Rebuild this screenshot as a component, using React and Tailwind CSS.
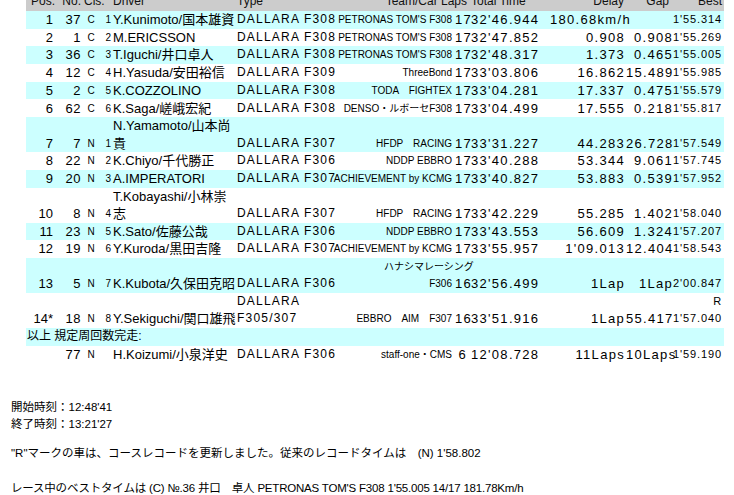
const F = { fontFamily: '"Liberation Sans","Noto Sans CJK JP",sans-serif' };
const rows = [
  ["1","37","C","1","Y.Kunimoto/国本雄資","DALLARA F308","PETRONAS TOM'S F308","17","32'46.944","180.68km/h","","1'55.314",1],
  ["2","1","C","2","M.ERICSSON","DALLARA F308","PETRONAS TOM'S F308","17","32'47.852","0.908","0.908","1'55.269",0],
  ["3","36","C","3","T.Iguchi/井口卓人","DALLARA F308","PETRONAS TOM'S F308","17","32'48.317","1.373","0.465","1'55.005",1],
  ["4","12","C","4","H.Yasuda/安田裕信","DALLARA F309","ThreeBond","17","33'03.806","16.862","15.489","1'55.985",0],
  ["5","2","C","5","K.COZZOLINO","DALLARA F308","TODA　FIGHTEX","17","33'04.281","17.337","0.475","1'55.579",1],
  ["6","62","C","6","K.Saga/嵯峨宏紀","DALLARA F308","DENSO・ルボーセF308","17","33'04.499","17.555","0.218","1'55.817",0],
  ["7","7","N","1",["N.Yamamoto/山本尚","貴"],"DALLARA F307","HFDP　RACING","17","33'31.227","44.283","26.728","1'57.549",1],
  ["8","22","N","2","K.Chiyo/千代勝正","DALLARA F306","NDDP EBBRO","17","33'40.288","53.344","9.061","1'57.745",0],
  ["9","20","N","3","A.IMPERATORI","DALLARA F307","ACHIEVEMENT by KCMG","17","33'40.827","53.883","0.539","1'57.952",1],
  ["10","8","N","4",["T.Kobayashi/小林崇","志"],"DALLARA F307","HFDP　RACING","17","33'42.229","55.285","1.402","1'58.040",0],
  ["11","23","N","5","K.Sato/佐藤公哉","DALLARA F306","NDDP EBBRO","17","33'43.553","56.609","1.324","1'57.207",1],
  ["12","19","N","6","Y.Kuroda/黒田吉隆","DALLARA F307","ACHIEVEMENT by KCMG","17","33'55.957","1'09.013","12.404","1'58.543",0],
  ["13","5","N","7","K.Kubota/久保田克昭","DALLARA F306",["ハナシマレーシング","F306"],"16","32'56.499","1Lap","1Lap","2'00.847",1],
  ["14*","18","N","8","Y.Sekiguchi/関口雄飛",["DALLARA","F305/307"],"EBBRO　AIM　F307","16","33'51.916","1Lap","55.417",["R","1'57.040"],0],
];
const cols = "grid-cols-[29px_27px_18px_12px_124px_88px_131px_15px_80px_76px_47px_51px]";
const two = (v) => Array.isArray(v);
function Cell({ v, cls }) {
  if (two(v)) return <div className={cls}>{v[0]}<br />{v[1]}</div>;
  return <div className={cls}>{v}</div>;
}
const big = "text-[13px]";
const sm = "text-[10px]";
const num = "text-[13px] tracking-[1.3px] whitespace-nowrap";
const typ = "text-[12px] tracking-[1.2px] whitespace-nowrap pl-[1px]";
const best = "text-[11px] tracking-[0.9px] text-right pr-[2px] whitespace-nowrap";
export default function App() {
  return (
    <div className="w-[734px] h-[495px] bg-white text-black overflow-hidden relative" style={F}>
      <div className="ml-[26px] w-[698px] mt-[-7px]">
        <div className={`grid ${cols} bg-[#cccccc] h-[18px] leading-[17px] text-[12px] text-[#111]`}>
          <div className="text-right">Pos.</div><div className="text-right pr-[1px]">No.</div><div className="col-span-2 pl-[2px]">Cls.</div>
          <div className="pl-[1px]">Driver</div><div className="pl-[1px]">Type</div><div className="text-right pr-[3px] col-span-2">Team/Car Laps</div>
          <div className="pl-[1px]">Total Time</div><div className="text-right pr-[2px]">Delay</div><div className="text-right pr-[4px]">Gap</div><div className="text-right pr-[2px]">Best</div>
        </div>
        {rows.map((r, i) => {
          const tall = r.slice(0, 12).some(two);
          return (
            <div key={i} className={`grid ${cols} items-end ${tall ? "h-[35px]" : "h-[17.7px]"} leading-[17.6px] ${r[12] ? "bg-[#ccffff]" : "bg-white"}`}>
              <Cell v={r[0]} cls={`${big} text-right pr-[2px] whitespace-nowrap`} />
              <Cell v={r[1]} cls={`${big} text-right pr-[1px] tracking-[0.5px]`} />
              <Cell v={r[2]} cls={`${sm} text-center`} />
              <Cell v={r[3]} cls={`${sm} text-right pr-[1px]`} />
              <Cell v={r[4]} cls={`${big} whitespace-nowrap pl-[1px]`} />
              <Cell v={r[5]} cls={typ} />
              {i === 12 ? (
                <div className="text-[10px] leading-[17.6px] text-right pr-[3px] whitespace-nowrap"><div className="text-left pl-[60px]">{r[6][0]}</div><div>{r[6][1]}</div></div>
              ) : (
                <Cell v={r[6]} cls={`${sm} text-right pr-[3px] whitespace-nowrap`} />
              )}
              <Cell v={r[7]} cls={`${num} text-right pr-[3px]`} />
              <Cell v={r[8]} cls={`${num} pl-[1px]`} />
              <Cell v={r[9]} cls={`${num} text-right pr-[1px]`} />
              <Cell v={r[10]} cls={`${num} text-right`} />
              <Cell v={r[11]} cls={best} />
            </div>
          );
        })}
        <div className="h-[17.7px] leading-[17.6px] bg-[#ccffff] text-[12px] pl-[1px]">以上 規定周回数完走:</div>
        <div className={`grid ${cols} items-end h-[17.7px] leading-[17.6px]`}>
          <div /><div className={`${big} text-right pr-[1px] tracking-[0.5px]`}>77</div><div className={`${sm} text-center`}>N</div><div />
          <div className={`${big} pl-[1px]`}>H.Koizumi/小泉洋史</div><div className={typ}>DALLARA F306</div>
          <div className={`${sm} text-right pr-[3px]`}>staff-one・CMS</div><div className={`${num} text-right pr-[3px]`}>6</div>
          <div className={`${num} pl-[1px]`}>12'08.728</div><div className={`${num} text-right pr-[1px]`}>11Laps</div>
          <div className={`${num} text-right`}>10Laps</div><div className={best}>1'59.190</div>
        </div>
      </div>
      <div className="pl-[11px] text-[11.5px] leading-[17px] mt-[36px]">
        <div>開始時刻：12:48'41</div>
        <div>終了時刻：13:21'27</div>
        <div className="mt-[12px]">"R"マークの車は、コースレコードを更新しました。従来のレコードタイムは　(N) 1'58.802</div>
        <div className="mt-[18px] tracking-[-0.2px]">レース中のベストタイムは (C) №.36 井口　卓人 PETRONAS TOM'S F308 1'55.005 14/17 181.78Km/h</div>
      </div>
    </div>
  );
}
